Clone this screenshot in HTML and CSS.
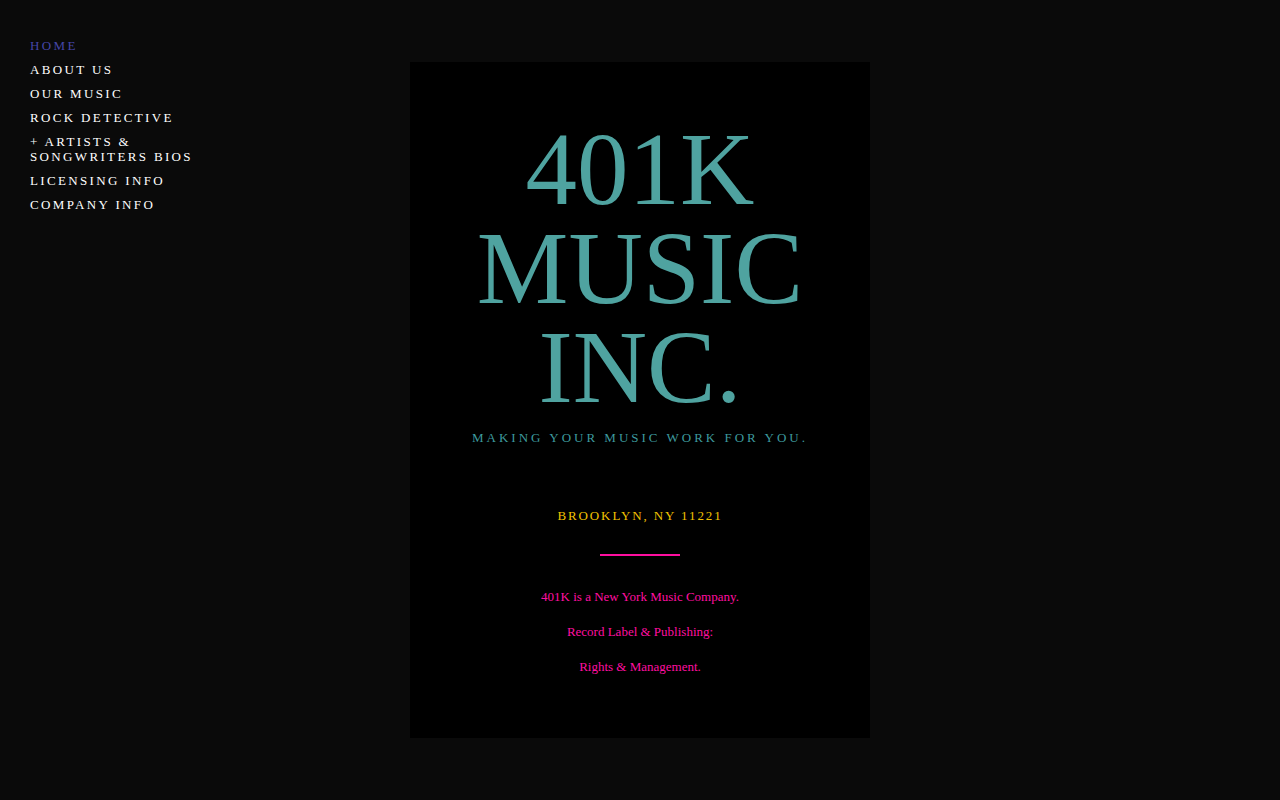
FILE: index.html
```html
<!DOCTYPE html>
<html lang="en">
<head>
<meta charset="utf-8">
<title>401K Music Inc.</title>
<link rel="stylesheet" href="styles.css">
</head>
<body>
<div class="page">
  <nav class="nav">
    <a class="nav-item active" href="#">HOME</a>
    <a class="nav-item" href="#">ABOUT US</a>
    <a class="nav-item" href="#">OUR MUSIC</a>
    <a class="nav-item" href="#">ROCK DETECTIVE</a>
    <a class="nav-item" href="#">+ ARTISTS &amp; SONGWRITERS BIOS</a>
    <a class="nav-item" href="#">LICENSING INFO</a>
    <a class="nav-item" href="#">COMPANY INFO</a>
  </nav>
  <main class="main">
    <section class="panel">
      <h1 class="title">401K<br>MUSIC<br>INC.</h1>
      <p class="tagline">MAKING YOUR MUSIC WORK FOR YOU.</p>
      <p class="location">BROOKLYN, NY 11221</p>
      <hr class="divider">
      <p class="body-text">401K is a New York Music Company.</p>
      <p class="body-text">Record Label &amp; Publishing:</p>
      <p class="body-text">Rights &amp; Management.</p>
    </section>
  </main>
</div>
</body>
</html>
```
FILE: styles.css
```css
html, body {
  margin: 0;
  padding: 0;
  background: #0a0a0a;
  height: 100%;
}
body {
  font-family: "Liberation Serif", "Times New Roman", serif;
  color: #fff;
}
.page {
  display: flex;
  align-items: flex-start;
  min-height: 800px;
}
.nav {
  display: flex;
  flex-direction: column;
  gap: 9px;
  width: 170px;
  padding: 38px 0 0 30px;
}
.nav-item {
  color: #fff;
  text-decoration: none;
  font-size: 13px;
  line-height: 15px;
  letter-spacing: 2.35px;
}
.nav-item.active {
  color: #4646a8;
}
.main {
  flex: 1;
  display: flex;
  padding-top: 62px;
  padding-left: 210px;
}
.panel {
  width: 460px;
  height: 676px;
  box-sizing: border-box;
  background: #000;
  display: flex;
  flex-direction: column;
  align-items: center;
  text-align: center;
  padding-top: 58px;
}
.title {
  margin: 0;
  font-weight: normal;
  font-size: 103px;
  line-height: 99px;
  color: #4fa3a0;
}
.tagline {
  margin: 13px 0 0;
  font-size: 13px;
  line-height: 15px;
  letter-spacing: 3px;
  color: #3d9a9e;
}
.location {
  margin: 63px 0 0;
  font-size: 13px;
  line-height: 15px;
  letter-spacing: 1.9px;
  color: #f2c200;
}
.divider {
  width: 80px;
  height: 2px;
  border: 0;
  margin: 31px 0 33px;
  background: #ff0fa0;
}
.body-text {
  margin: 0 0 20px;
  font-size: 13px;
  line-height: 15px;
  color: #ff0fa0;
}
```
